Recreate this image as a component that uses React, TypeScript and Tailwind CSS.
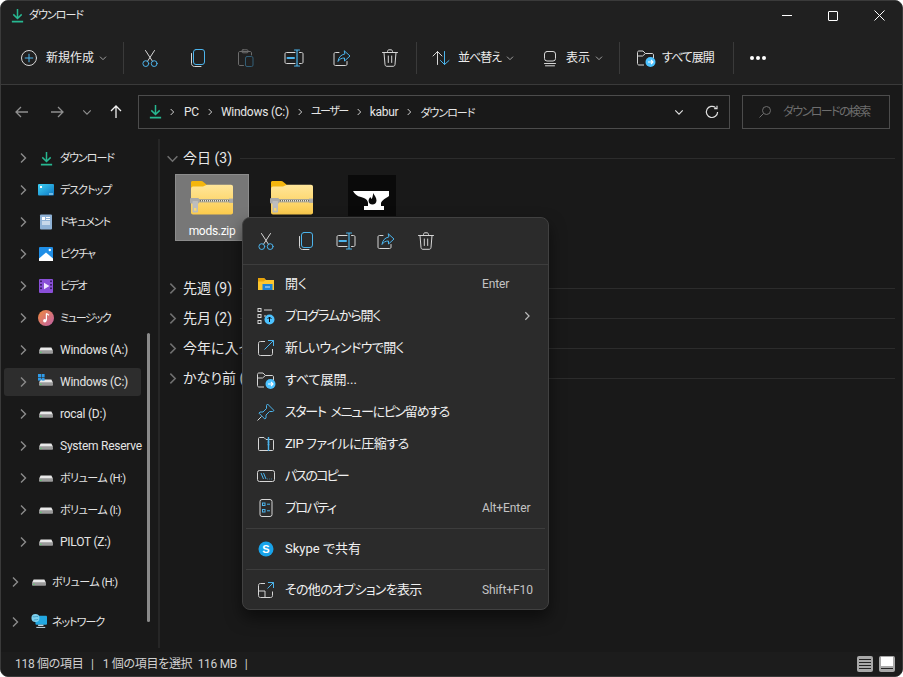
import React from "react";

const B = "#4cb4ec";
const G = "#d6d6d6";

type P = { s?: number; o?: number };

function Ico({ s = 20, o = 1, children }: P & { children: React.ReactNode }) {
  return (
    <svg width={s} height={s} viewBox="0 0 20 20" fill="none" strokeWidth={1} strokeLinecap="round" strokeLinejoin="round" opacity={o} stroke={G}>
      {children}
    </svg>
  );
}

const Cut = () => (
  <Ico>
    <path d="M5.5 2.5 L12.4 13.2 M14.5 2.5 L7.6 13.2" />
    <circle cx="5.8" cy="15.6" r="2.9" stroke={B} />
    <circle cx="14.2" cy="15.6" r="2.9" stroke={B} />
  </Ico>
);
const Copy = () => (
  <Ico>
    <path d="M3.5 5.5 V15.5 C3.5 17.2 4.8 18.5 6.5 18.5 H13" />
    <rect x="5.5" y="1.5" width="11" height="15" rx="2.5" stroke={B} />
  </Ico>
);
const Paste = () => (
  <Ico o={0.42}>
    <path d="M7.5 17.5 H4 C3 17.5 2.5 17 2.5 16 V5 C2.5 4 3 3.5 4 3.5 H14 C15 3.5 15.5 4 15.5 5 V7" />
    <rect x="6" y="1.8" width="6" height="3" rx="1" />
    <rect x="9.5" y="8.5" width="7.5" height="10" rx="1.5" stroke={B} />
  </Ico>
);
const Rename = () => (
  <Ico>
    <path d="M11 4.5 H2.5 C1.5 4.5 1 5 1 6 V14 C1 15 1.5 15.5 2.5 15.5 H11 M15.5 4.5 H17.5 C18.5 4.5 19 5 19 6 V14 C19 15 18.5 15.5 17.5 15.5 H15.5" />
    <path d="M10.5 2 H15.5 M13 2 V18 M10.5 18 H15.5" stroke={B} strokeWidth={1.2} />
    <path d="M3.5 10 H10" stroke={B} strokeWidth={2} />
  </Ico>
);
const Share = () => (
  <Ico>
    <path d="M7 4.5 H3.5 C2.5 4.5 2 5 2 6 V16 C2 17 2.5 17.5 3.5 17.5 H13.5 C14.5 17.5 15 17 15 16 V13.5" />
    <path d="M12.5 3 L18 8 L12.5 13 V10 C9.5 10 7.5 11 6 13.5 C6.5 9.5 8.8 6.8 12.5 6 Z" stroke={B} />
  </Ico>
);
const Trash = () => (
  <Ico>
    <path d="M2.5 4.5 H17.5 M7.5 4.5 V3.5 C7.5 2.4 8.3 1.8 9 1.8 H11 C11.7 1.8 12.5 2.4 12.5 3.5 V4.5" />
    <path d="M4 4.5 L5 16.5 C5.1 17.6 5.8 18.3 7 18.3 H13 C14.2 18.3 14.9 17.6 15 16.5 L16 4.5" />
    <path d="M8.3 8 V14.5 M11.7 8 V14.5" />
  </Ico>
);
const Plus = () => (
  <Ico>
    <circle cx="10" cy="10" r="7.5" />
    <path d="M10 6.2 V13.8 M6.2 10 H13.8" stroke={B} />
  </Ico>
);
const Sort = () => (
  <Ico>
    <path d="M6.5 16.5 V3.5 M2 8 L6.5 3.5 L11 8" />
    <path d="M13.5 3.5 V16.5 M9.5 12.5 L13.5 16.5 L18 12.5" stroke={B} />
  </Ico>
);
const View = () => (
  <Ico>
    <rect x="4.5" y="3.5" width="11" height="9.5" rx="2.5" />
    <path d="M4.5 15.5 H15.5 M5.5 17.8 H14.5" />
  </Ico>
);
const Extract = ({ s = 20 }: { s?: number }) => (
  <svg width={s} height={s} viewBox="0 0 20 20" fill="none" stroke={G} strokeWidth={1} strokeLinejoin="round">
    <path d="M8 17 H3 C2 17 1.5 16.4 1.5 15.5 V4.5 C1.5 3.6 2 3 3 3 H7 L9.5 5.5 H16 C17 5.5 17.5 6 17.5 7 V10" />
    <path d="M1.5 8 H6.5 L9.5 5.5" />
    <circle cx="14.5" cy="14" r="5" fill="#4cc2ff" stroke="none" />
    <path d="M12 14 H17 M15 12 L17 14 L15 16" stroke="#fff" strokeWidth={1.1} />
  </svg>
);
const DownArrow = ({ s = 16 }: { s?: number }) => (
  <svg width={s} height={s} viewBox="0 0 16 16" fill="none" stroke="#27b891" strokeWidth={1.6}>
    <path d="M8 1 V11 M3.5 6.8 L8 11.2 L12.5 6.8" />
    <path d="M2 14.6 H14" strokeWidth={1.8} />
  </svg>
);
const Chev = ({ d = "right", c = "#8b8b8b", s = 12 }: { d?: "right" | "down"; c?: string; s?: number }) => (
  <svg width={s} height={s} viewBox="0 0 12 12" fill="none" stroke={c} strokeWidth={1.4}>
    {d === "right" ? <path d="M4 1.5 L8.5 6 L4 10.5" /> : <path d="M1.5 4 L6 8.5 L10.5 4" />}
  </svg>
);

const Drive = ({ win }: { win?: boolean }) => (
  <svg width="16" height="16" viewBox="0 0 16 16">
    <path d="M2.6 5.5 H13.4 L15 8.8 H1 Z" fill="#e8e8e8" />
    <rect x="1" y="8.8" width="14" height="3" rx="0.8" fill="#9a9a9a" />
    <rect x="2" y="9.8" width="1.6" height="1" fill="#52d26a" />
    {win && (
      <g fill="#2f9be8">
        <rect x="0" y="0" width="3" height="3" />
        <rect x="3.6" y="0" width="3" height="3" />
        <rect x="0" y="3.6" width="3" height="3" />
        <rect x="3.6" y="3.6" width="3" height="3" />
      </g>
    )}
  </svg>
);
const Desktop = () => (
  <svg width="16" height="16" viewBox="0 0 16 16">
    <defs>
      <linearGradient id="dk" x1="0" y1="0" x2="1" y2="1">
        <stop offset="0" stopColor="#3fd0f2" />
        <stop offset="1" stopColor="#0d77c4" />
      </linearGradient>
    </defs>
    <rect x="0" y="2" width="16" height="11.5" rx="1" fill="url(#dk)" />
    <rect x="2" y="4" width="2" height="2" fill="#fff" />
    <rect x="11" y="11.5" width="4" height="1" fill="#d0eefc" />
  </svg>
);
const Doc = () => (
  <svg width="16" height="16" viewBox="0 0 16 16">
    <rect x="2" y="0.5" width="12" height="15" rx="1" fill="#8fb2d6" />
    <rect x="4" y="3" width="3" height="3" fill="#fff" />
    <path d="M8 3.5 H12 M8 5.5 H12 M4 8 H12 M4 10 H12" stroke="#fff" strokeWidth="1" />
  </svg>
);
const Pic = () => (
  <svg width="16" height="16" viewBox="0 0 16 16">
    <rect x="1" y="1" width="14" height="14" rx="1" fill="#1f8ee6" />
    <path d="M1 15 V12.5 L8 6.5 L15 12.5 V15 Z" fill="#fff" />
    <circle cx="11.8" cy="4" r="1.2" fill="#fff" />
  </svg>
);
const Video = () => (
  <svg width="16" height="16" viewBox="0 0 16 16">
    <rect x="1" y="1" width="14" height="14" rx="1" fill="#8a4fd8" />
    <path d="M6 4.8 L11.5 8 L6 11.2 Z" fill="#f0e4ff" />
    <g fill="#2a1650">
      <rect x="2.2" y="2.5" width="1.6" height="1.6" />
      <rect x="2.2" y="6" width="1.6" height="1.6" />
      <rect x="2.2" y="9.5" width="1.6" height="1.6" />
      <rect x="12.2" y="2.5" width="1.6" height="1.6" />
      <rect x="12.2" y="6" width="1.6" height="1.6" />
      <rect x="12.2" y="9.5" width="1.6" height="1.6" />
    </g>
  </svg>
);
const Music = () => (
  <svg width="16" height="16" viewBox="0 0 16 16">
    <defs>
      <linearGradient id="mu" x1="0" y1="0" x2="1" y2="1">
        <stop offset="0" stopColor="#f08a3c" />
        <stop offset="1" stopColor="#c060a8" />
      </linearGradient>
    </defs>
    <circle cx="8" cy="8" r="8" fill="url(#mu)" />
    <path d="M8.4 3.5 V10.5" stroke="#fff" strokeWidth="1.2" />
    <path d="M8.4 3.5 L11 5.2" stroke="#fff" strokeWidth="1.2" />
    <circle cx="6.8" cy="10.8" r="1.7" fill="#fff" />
  </svg>
);
const Net = () => (
  <svg width="18" height="18" viewBox="0 0 18 18">
    <rect x="5" y="2" width="13" height="10" rx="1" fill="#22a7e0" />
    <rect x="8" y="12" width="6" height="1.5" fill="#bcd4e0" />
    <rect x="6" y="14.5" width="10" height="1.2" fill="#bcd4e0" />
    <circle cx="5" cy="4.5" r="4.5" fill="#7fd1ee" />
    <path d="M2 3 C4 4 6 2 8 3 M3 7 C5 6 6 7 8 6" stroke="#2d8fb8" strokeWidth="0.8" fill="none" />
  </svg>
);

function ZipFolder() {
  return (
    <svg width="44" height="36" viewBox="0 0 44 36">
      <defs>
        <linearGradient id="zf" x1="0" y1="0" x2="0" y2="1">
          <stop offset="0" stopColor="#ffe69a" />
          <stop offset="1" stopColor="#fccb4c" />
        </linearGradient>
      </defs>
      <path d="M1 8 V2.5 C1 1.5 1.7 1 2.6 1 H11 C12 1 12.8 1.4 13.4 2 L17 5 H40 V12 H1 Z" fill="#f4b60e" />
      <path d="M1 9 C1 7.8 1.8 6.6 3 6.6 L13 6.6 L17 4.8 H41 C42.2 4.8 43 5.6 43 6.8 V32.4 C43 33.6 42.2 34.4 41 34.4 H3 C1.8 34.4 1 33.6 1 32.4 Z" fill="url(#zf)" />
      <rect x="1" y="19" width="42" height="3.4" fill="#a8a596" />
      <rect x="10" y="20" width="30" height="1.4" fill="#e9e7da" />
      <path d="M10 20.7 H40" stroke="#6b6a60" strokeWidth="1.4" strokeDasharray="1 1" />
      <rect x="39" y="18.6" width="4" height="4.2" fill="#a9a9a9" />
      <rect x="0" y="18" width="9" height="5.4" rx="1" fill="#a9a9a9" />
      <rect x="2.5" y="21" width="5.5" height="11.5" rx="0.8" fill="#bdbdbd" />
      <rect x="4" y="28" width="2.4" height="2.8" fill="#f6d878" />
    </svg>
  );
}

const Anvil = () => (
  <svg width="48" height="41" viewBox="0 0 48 41">
    <rect width="48" height="41" fill="#0a0a0a" />
    <path d="M5 16 H41 V21 C37.5 23.5 34 25 33 28 V31 H36 V35 H16 V31 H20 V28 C20 25 17 23 13 22 C9 21.2 6.5 19 5 16 Z" fill="#fff" />
    <path d="M25 18 C26 20 28.5 22 28.5 25.5 C28.5 28 26.6 29.5 24.5 29.5 C22.2 29.5 20.4 28 20.6 25.5 C20.8 24 21.6 23 22.4 22 C22.8 23 23.2 23.6 23.8 24 C24.6 22 25.2 20 25 18 Z" fill="#0a0a0a" />
  </svg>
);

function Divider() {
  return <div className="w-px h-[32px] bg-[#3a3a3a]" />;
}

function IconBtn({ children }: { children: React.ReactNode }) {
  return <div className="w-12 h-8 flex items-center justify-center">{children}</div>;
}

function Sep() {
  return <span className="px-[7px] flex"><Chev c="#e0e0e0" s={8} /></span>;
}

const KANA = "text-[11px] tracking-[-1px] pt-[2px]";
const VOL = "text-[11px] tracking-[-0.5px] pt-[2px]";
const LATIN = "text-[12px] tracking-[-0.25px]";

function NavRow({ icon, label, active, cls = LATIN }: { icon: React.ReactNode; label: string; active?: boolean; cls?: string }) {
  return (
    <div className="h-8 flex items-center">
      <div className={active ? "h-7 ml-[3px] w-[137px] rounded-[3px] bg-[#2d2d2d] flex items-center whitespace-nowrap" : "h-7 ml-[3px] w-[137px] flex items-center whitespace-nowrap"}>
        <span className="w-[14px] shrink-0 ml-[12px] flex justify-center"><Chev /></span>
        <span className="w-4 shrink-0 ml-[8px] flex justify-center">{icon}</span>
        <span className={"ml-[6px] text-[#e4e4e4] " + cls}>{label}</span>
      </div>
    </div>
  );
}

function NavRowOuter({ icon, label, cls }: { icon: React.ReactNode; label: string; cls: string }) {
  return (
    <div className="h-8 mt-2 flex items-center whitespace-nowrap">
      <span className="w-[14px] ml-[7px] flex justify-center"><Chev /></span>
      <span className="w-4 ml-[9px] flex justify-center">{icon}</span>
      <span className={"ml-[5px] text-[#e4e4e4] " + cls}>{label}</span>
    </div>
  );
}

function GroupHead({ label, open }: { label: string; open?: boolean }) {
  return (
    <div className="h-[30px] flex items-center whitespace-nowrap">
      <span className="w-[14px] ml-[5px] flex justify-center"><Chev d={open ? "down" : "right"} c="#707070" s={13} /></span>
      <span className="ml-[4px] text-[14px] text-[#e8e8e8]">{label}</span>
      <span className="ml-2 flex-1 h-px bg-[#2c2c2c]" />
    </div>
  );
}

function Tile({ selected, label, children }: { selected?: boolean; label: string; children: React.ReactNode }) {
  return (
    <div className={selected ? "w-[74px] h-[67px] bg-[#777777] border border-[#8c8c8c] flex flex-col items-center" : "w-[74px] h-[67px] flex flex-col items-center border border-transparent"}>
      <div className="h-[41px] flex items-end justify-center">{children}</div>
      <div className="text-[12px] leading-[16px] mt-[7px] tracking-[-0.3px] text-white">{label}</div>
    </div>
  );
}

function MenuRow({ icon, label, hint, arrow, cls = "text-[13px]" }: { icon: React.ReactNode; label: string; hint?: string; arrow?: boolean; cls?: string }) {
  return (
    <div className="h-8 flex items-center whitespace-nowrap">
      <span className="w-5 ml-[13px] flex justify-center">{icon}</span>
      <span className={"ml-[9px] text-[#f0f0f0] flex-1 " + cls}>{label}</span>
      {hint && <span className="absolute left-[239px] text-[12px] tracking-[-0.1px] text-[#c4c4c4]">{hint}</span>}
      {arrow && <span className="mr-[16px]"><Chev c="#bdbdbd" s={10} /></span>}
    </div>
  );
}

const MenuSep = () => <div className="h-px my-1 bg-[#3d3d3d] mx-[3px]" />;

export default function App() {
  return (
    <div className="w-[903px] h-[677px] overflow-hidden relative flex flex-col bg-[#191919] rounded-[8px] border border-[#3a3a3a] [font-family:'Roboto','Noto_Sans_CJK_JP',sans-serif] [font-feature-settings:'palt'] text-white box-border">
      {/* title bar */}
      <div className="h-[37px] pb-[8px] bg-[#202020] flex items-center shrink-0">
        <span className="ml-[9px] flex"><DownArrow s={15} /></span>
        <span className={"ml-[4px] text-[#e8e8e8] " + KANA}>ダウンロード</span>
        <div className="ml-auto flex items-center">
          <div className="w-[46px] h-8 flex items-center justify-center"><span className="w-[10px] h-px bg-white" /></div>
          <div className="w-[46px] h-8 flex items-center justify-center"><span className="w-[10px] h-[10px] border border-white rounded-[1px]" /></div>
          <div className="w-[46px] h-8 flex items-center justify-center">
            <svg width="11" height="11" viewBox="0 0 11 11" stroke="#fff" strokeWidth="1"><path d="M0.5 0.5 L10.5 10.5 M10.5 0.5 L0.5 10.5" /></svg>
          </div>
        </div>
      </div>
      {/* toolbar */}
      <div className="h-[47px] pb-[6px] bg-[#202020] border-b border-[#3a3a3a] flex items-center shrink-0 text-[12px] text-[#ececec] whitespace-nowrap">
        <span className="ml-[18px] flex"><Plus /></span>
        <span className="ml-[7px]">新規作成</span>
        <span className="ml-[5px] flex"><Chev d="down" c="#aaa" s={8} /></span>
        <span className="ml-[16px] flex"><Divider /></span>
        <span className="ml-[2px] flex">
          <IconBtn><Cut /></IconBtn>
          <IconBtn><Copy /></IconBtn>
          <IconBtn><Paste /></IconBtn>
          <IconBtn><Rename /></IconBtn>
          <IconBtn><Share /></IconBtn>
          <IconBtn><Trash /></IconBtn>
        </span>
        <span className="ml-[2px] flex"><Divider /></span>
        <span className="ml-[14px] flex"><Sort /></span>
        <span className="ml-[7px] w-[42px] tracking-[-1px]">並べ替え</span>
        <span className="ml-[6px] flex"><Chev d="down" c="#aaa" s={8} /></span>
        <span className="ml-[26px] flex"><View /></span>
        <span className="ml-[6px] w-[24px]">表示</span>
        <span className="ml-[5px] flex"><Chev d="down" c="#aaa" s={8} /></span>
        <span className="ml-[16px] flex"><Divider /></span>
        <span className="ml-[16px] flex"><Extract /></span>
        <span className="ml-[6px] w-[52px] tracking-[-1px]">すべて展開</span>
        <span className="ml-[19px] flex"><Divider /></span>
        <span className="ml-[16px] flex gap-[2px]">
          <i className="w-[4px] h-[4px] rounded-full bg-white" />
          <i className="w-[4px] h-[4px] rounded-full bg-white" />
          <i className="w-[4px] h-[4px] rounded-full bg-white" />
        </span>
      </div>
      {/* address row */}
      <div className="h-[50px] pt-[3px] bg-[#191919] flex items-center shrink-0">
        <span className="ml-[13px] flex">
          <svg width="16" height="16" viewBox="0 0 16 16" fill="none" stroke="#8f8f8f" strokeWidth="1.3"><path d="M14 8 H2 M7 3 L2 8 L7 13" /></svg>
        </span>
        <span className="ml-[19px] flex">
          <svg width="16" height="16" viewBox="0 0 16 16" fill="none" stroke="#8f8f8f" strokeWidth="1.3"><path d="M2 8 H14 M9 3 L14 8 L9 13" /></svg>
        </span>
        <span className="ml-[17px] flex"><Chev d="down" c="#8f8f8f" s={10} /></span>
        <span className="ml-[16px] flex">
          <svg width="16" height="16" viewBox="0 0 16 16" fill="none" stroke="#f0f0f0" strokeWidth="1.3"><path d="M8 14 V2 M3 7 L8 2 L13 7" /></svg>
        </span>
        <div className="ml-[14px] w-[592px] h-[34px] border border-[#4c4c4c] flex items-center text-[12px] tracking-[-0.25px] text-[#e6e6e6] whitespace-nowrap">
          <span className="ml-[9px] flex"><DownArrow s={15} /></span>
          <span className="ml-[-2px] flex"><Sep /></span>
          <span className="ml-[1px]">PC</span>
          <Sep />
          <span>Windows (C:)</span>
          <Sep />
          <span className="text-[11px] tracking-[-1.5px] pt-[2px]">ユーザー</span>
          <Sep />
          <span>kabur</span>
          <Sep />
          <span className="text-[11px] tracking-[-1px] pt-[6px]">ダウンロード</span>
          <span className="ml-auto flex"><Chev d="down" c="#e0e0e0" s={10} /></span>
          <span className="ml-[21px] mr-[10px] flex">
            <svg width="14" height="14" viewBox="0 0 14 14" fill="none" stroke="#e0e0e0" strokeWidth="1.2"><path d="M12.6 7 A5.6 5.6 0 1 1 10.6 2.6 M12 0.8 V3.6 H9.2" /></svg>
          </span>
        </div>
        <div className="ml-3 w-[148px] h-[34px] border border-[#4c4c4c] flex items-center text-[12px] text-[#6e6e6e] whitespace-nowrap">
          <span className="ml-[15px] flex">
            <svg width="14" height="14" viewBox="0 0 14 14" fill="none" stroke="#6e6e6e" strokeWidth="1"><circle cx="8.5" cy="5.5" r="4" /><path d="M5.5 8.5 L1.5 12.5" /></svg>
          </span>
          <span className="ml-[11px] tracking-[-1.6px]">ダウンロードの検索</span>
        </div>
      </div>
      {/* body */}
      <div className="flex-1 min-h-0 flex relative">
        <div className="w-[157px] shrink-0 pt-[7px] relative">
          <NavRow icon={<DownArrow s={15} />} label="ダウンロード" cls={KANA} />
          <NavRow icon={<Desktop />} label="デスクトップ" cls={KANA} />
          <NavRow icon={<Doc />} label="ドキュメント" cls={KANA} />
          <NavRow icon={<Pic />} label="ピクチャ" cls={KANA} />
          <NavRow icon={<Video />} label="ビデオ" cls="text-[11px] tracking-[-1.5px] pt-[2px]" />
          <NavRow icon={<Music />} label="ミュージック" cls="text-[11px] tracking-[-1.3px] pt-[2px]" />
          <NavRow icon={<Drive />} label="Windows (A:)" />
          <NavRow icon={<Drive win />} label="Windows (C:)" active />
          <NavRow icon={<Drive />} label="rocal (D:)" />
          <NavRow icon={<Drive />} label="System Reserve" />
          <NavRow icon={<Drive />} label="ボリューム (H:)" cls={VOL} />
          <NavRow icon={<Drive />} label="ボリューム (I:)" cls={VOL} />
          <NavRow icon={<Drive />} label="PILOT (Z:)" />
          <NavRowOuter icon={<Drive />} label="ボリューム (H:)" cls={VOL} />
          <NavRowOuter icon={<Net />} label="ネットワーク" cls={KANA} />
          <div className="absolute left-[146px] top-[198px] w-[3px] h-[289px] rounded-full bg-[#8a8a8a]" />
        </div>
        <div className="w-[2px] bg-[#262626] shrink-0 my-[4px]" />
        <div className="flex-1 pt-[8px] pr-[7px]">
          <GroupHead label="今日 (3)" open />
          <div className="flex gap-[6px] ml-[15px] mt-[1px] h-[99px]">
            <Tile selected label="mods.zip"><ZipFolder /></Tile>
            <Tile label=""><ZipFolder /></Tile>
            <Tile label=""><Anvil /></Tile>
          </div>
          <GroupHead label="先週 (9)" />
          <GroupHead label="先月 (2)" />
          <GroupHead label="今年に入って (12)" />
          <GroupHead label="かなり前 (40)" />
        </div>
      </div>
      {/* status bar */}
      <div className="h-[24px] shrink-0 flex items-center text-[12px] tracking-[-0.3px] text-[#d0d0d0] whitespace-nowrap bg-[#1c1c1c]">
        <span className="ml-[14px] w-[66px]">118 個の項目</span>
        <span className="ml-[10px]">|</span>
        <span className="ml-[9px] w-[87px]">1 個の項目を選択</span>
        <span className="ml-[8px] w-[38px]">116 MB</span>
        <span className="ml-[9px]">|</span>
        <span className="ml-auto flex flex-col gap-[2px] justify-center items-center w-4 h-4 bg-[#a8a8a8] rounded-[2px]">
          <i className="w-3 h-px bg-[#222]" /><i className="w-3 h-px bg-[#222]" /><i className="w-3 h-px bg-[#222]" /><i className="w-3 h-px bg-[#222]" />
        </span>
        <span className="ml-[6px] mr-[7px] w-4 h-4 bg-[#a8a8a8] rounded-[2px] flex flex-col items-center pt-[1px]">
          <i className="w-3 h-[9px] bg-white" />
          <i className="w-3 h-px bg-[#222] mt-[2px]" />
        </span>
      </div>
      {/* context menu */}
      <div className="absolute left-[241px] top-[216px] w-[307px] h-[393px] rounded-[8px] bg-[#2b2b2b] border border-[#414141] shadow-[0_8px_16px_rgba(0,0,0,0.5)]">
        <div className="h-[46px] flex items-center pl-[3px]">
          <span className="w-10 flex justify-center"><Cut /></span>
          <span className="w-10 flex justify-center"><Copy /></span>
          <span className="w-10 flex justify-center"><Rename /></span>
          <span className="w-10 flex justify-center"><Share /></span>
          <span className="w-10 flex justify-center"><Trash /></span>
        </div>
        <div className="h-px bg-[#3d3d3d]" />
        <div className="pt-[3px] relative">
          <MenuRow
            label="開く"
            hint="Enter"
            cls="text-[13px]"
            icon={
              <svg width="18" height="18" viewBox="0 0 18 18">
                <path d="M1 3 H7 L9 5 H17 V15 H1 Z" fill="#fcc62e" />
                <path d="M1 3 H7 L8.5 5 L6.5 6.5 H1 Z" fill="#e8a30a" />
                <rect x="5.5" y="9" width="10" height="6" fill="#1c82d4" />
                <rect x="8" y="11.5" width="5" height="1" fill="#bfe4ff" />
              </svg>
            }
          />
          <MenuRow
            label="プログラムから開く"
            arrow
            cls="text-[13px] tracking-[-1.1px]"
            icon={
              <svg width="20" height="20" viewBox="0 0 20 20" fill="none" stroke={G}>
                <rect x="2" y="2.5" width="3" height="3" />
                <rect x="2" y="8.5" width="3" height="3" />
                <rect x="2" y="14.5" width="3" height="3" />
                <path d="M8 4 H16 M8 10 H10" />
                <circle cx="13.5" cy="13.5" r="5" fill="#4cc2ff" stroke="none" />
                <path d="M13.5 16 V11 M11.5 13 L13.5 11 L15.5 13" stroke="#111" />
              </svg>
            }
          />
          <MenuRow
            label="新しいウィンドウで開く"
            cls="text-[13px] tracking-[-0.6px]"
            icon={
              <svg width="20" height="20" viewBox="0 0 20 20" fill="none" stroke={G}>
                <path d="M9 3.5 H4.5 C3.2 3.5 2.5 4.2 2.5 5.5 V15.5 C2.5 16.8 3.2 17.5 4.5 17.5 H14.5 C15.8 17.5 16.5 16.8 16.5 15.5 V11" />
                <path d="M12 2.5 H17.5 V8 M17.5 2.5 L8.5 11.5" stroke={B} />
              </svg>
            }
          />
          <MenuRow label="すべて展開..." icon={<Extract />} />
          <MenuRow
            label="スタート メニューにピン留めする"
            cls="text-[13px] tracking-[-1.3px] [word-spacing:3px]"
            icon={
              <svg width="20" height="20" viewBox="0 0 20 20" fill="none" stroke={B} strokeLinejoin="round">
                <path d="M11.5 2 L18 8.5 L16.5 9.5 L13.5 9.5 L10 13 L10 16 L8.8 17 L3 11.2 L4 10 L7 10 L10.5 6.5 L10.5 3.5 Z" />
                <path d="M5.5 14.5 L1.5 18.5" stroke={G} />
              </svg>
            }
          />
          <MenuRow
            label="ZIP ファイルに圧縮する"
            cls="text-[13px] tracking-[-0.45px]"
            icon={
              <svg width="20" height="20" viewBox="0 0 20 20" fill="none" stroke={G} strokeLinejoin="round">
                <path d="M3.5 3.5 H8 L10 5.5 H16.5 C17.2 5.5 17.5 6 17.5 6.5 V15.5 C17.5 16.2 17 16.5 16.5 16.5 H3.5 C2.8 16.5 2.5 16.2 2.5 15.5 V4.5 C2.5 4 2.8 3.5 3.5 3.5 Z" />
                <path d="M12.5 3 V17 M11.5 5.5 H13.5 M11.5 8 H13.5 M11.5 10.5 H13.5" stroke={B} strokeWidth="1.4" />
              </svg>
            }
          />
          <MenuRow
            label="パスのコピー"
            cls="text-[13px] tracking-[-1.8px]"
            icon={
              <svg width="20" height="20" viewBox="0 0 20 20" fill="none" stroke={G}>
                <rect x="1.5" y="4.5" width="17" height="11" rx="2" />
                <path d="M5 7 L7.5 13 M7.5 7 L10 13 M11.5 13 H12 M13.5 13 H14 M15.5 13 H16" stroke={B} />
              </svg>
            }
          />
          <MenuRow
            label="プロパティ"
            hint="Alt+Enter"
            cls="text-[13px] tracking-[-1.5px]"
            icon={
              <svg width="20" height="20" viewBox="0 0 20 20" fill="none" stroke={G}>
                <rect x="4" y="1.5" width="12" height="17" rx="2" />
                <g stroke={B}>
                  <rect x="6.5" y="5" width="2.5" height="2.5" />
                  <rect x="6.5" y="11.5" width="2.5" height="2.5" />
                  <path d="M11 6.2 H14 M11 12.8 H14" />
                </g>
              </svg>
            }
          />
          <MenuSep />
          <MenuRow
            label="Skype で共有"
            cls="text-[13px]"
            icon={
              <svg width="16" height="16" viewBox="0 0 16 16">
                <circle cx="8" cy="8" r="7.5" fill="#18a3ea" />
                <text x="8" y="11.8" textAnchor="middle" fontSize="11" fontWeight="700" fill="#fff" fontFamily="Liberation Sans">S</text>
              </svg>
            }
          />
          <MenuSep />
          <MenuRow
            label="その他のオプションを表示"
            hint="Shift+F10"
            cls="text-[13px] tracking-[-0.7px]"
            icon={
              <svg width="20" height="20" viewBox="0 0 20 20" fill="none" stroke={G}>
                <path d="M9 3.5 H4.5 C3.2 3.5 2.5 4.2 2.5 5.5 V15.5 C2.5 16.8 3.2 17.5 4.5 17.5 H14.5 C15.8 17.5 16.5 16.8 16.5 15.5 V11.5 M2.5 11 H9 V17.5" />
                <path d="M12 2.5 H17.5 V8 M17.5 2.5 L11.5 8.5" stroke={B} />
              </svg>
            }
          />
        </div>
      </div>
    </div>
  );
}
